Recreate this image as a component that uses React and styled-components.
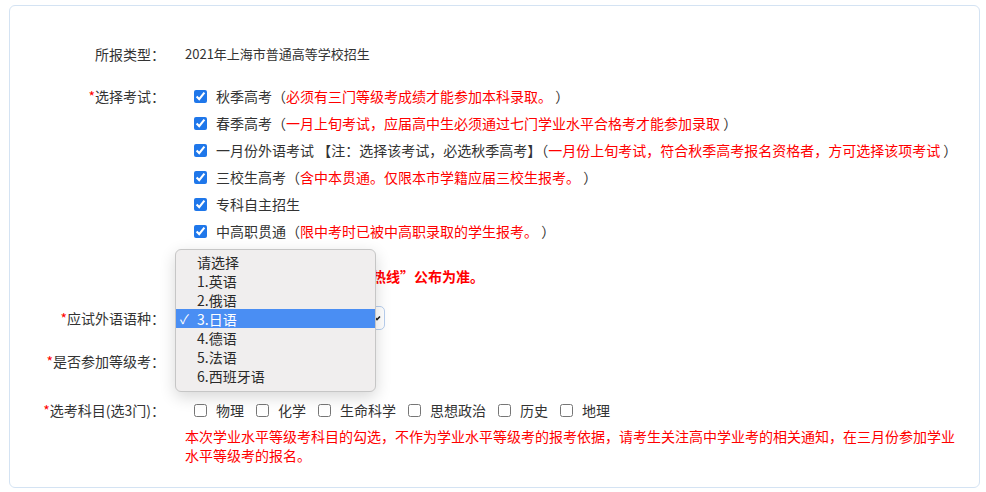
import React from "react";
import styled, { createGlobalStyle } from "styled-components";

const GlobalStyle = createGlobalStyle`
  html, body {
    margin: 0;
    padding: 0;
    background: #fff;
  }
  body {
    font-family: "Noto Sans CJK SC", "Noto Sans", sans-serif;
    font-size: 14px;
    color: #333;
  }
`;

const exams = [
  { label: "秋季高考", note: "必须有三门等级考成绩才能参加本科录取。" },
  { label: "春季高考", note: "一月上旬考试，应届高中生必须通过七门学业水平合格考才能参加录取" },
  {
    label: "一月份外语考试 【注：选择该考试，必选秋季高考】",
    note: "一月份上旬考试，符合秋季高考报名资格者，方可选择该项考试",
  },
  { label: "三校生高考", note: "含中本贯通。仅限本市学籍应届三校生报考。" },
  { label: "专科自主招生" },
  { label: "中高职贯通", note: "限中考时已被中高职录取的学生报考。" },
];

const languages = ["请选择", "1.英语", "2.俄语", "3.日语", "4.德语", "5.法语", "6.西班牙语"];
const subjects = ["物理", "化学", "生命科学", "思想政治", "历史", "地理"];

const App = () => {
  return (
    <>
      <GlobalStyle />
      <Card>
        <Row>
          <Label>所报类型：</Label>
          <Content>
            <ValueText>2021年上海市普通高等学校招生</ValueText>
          </Content>
        </Row>

        <Row $align="flex-start" $mt={22}>
          <Label>
            <Star>*</Star>选择考试：
          </Label>
          <Content>
            <CheckList>
              {exams.map((exam) => (
                <CheckItem key={exam.label}>
                  <Box type="checkbox" defaultChecked />
                  <span>
                    {exam.label}
                    {exam.note && (
                      <>
                        （<RedText>{exam.note}</RedText> ）
                      </>
                    )}
                  </span>
                </CheckItem>
              ))}
            </CheckList>
          </Content>
        </Row>

        <Row $mt={25}>
          <Label />
          <Content>
            <BoldNote>应试外语语种须以“上海招考热线”公布为准。</BoldNote>
          </Content>
        </Row>

        <Row $mt={20}>
          <Label>
            <Star>*</Star>应试外语语种：
          </Label>
          <Content>
            <SelectWrap>
              <FakeSelect>
                <span>3.日语</span>
                <svg width="8" height="6" viewBox="0 0 8 6">
                  <path d="M1 1.5 L4 4.5 L7 1.5" fill="none" stroke="#222" strokeWidth="1.6" />
                </svg>
              </FakeSelect>
              <Popup>
                {languages.map((lang) => (
                  <PopupItem key={lang} $active={lang === "3.日语"}>
                    <Tick>{lang === "3.日语" ? "✓" : ""}</Tick>
                    {lang}
                  </PopupItem>
                ))}
              </Popup>
            </SelectWrap>
          </Content>
        </Row>

        <Row $mt={21}>
          <Label>
            <Star>*</Star>是否参加等级考：
          </Label>
          <Content>
            <InlineChecks>
              <CheckItem>
                <Box type="radio" name="level" defaultChecked />是
              </CheckItem>
              <CheckItem>
                <Box type="radio" name="level" />否
              </CheckItem>
            </InlineChecks>
          </Content>
        </Row>

        <Row $align="flex-start" $mt={29}>
          <Label>
            <Star>*</Star>选考科目(选3门)：
          </Label>
          <Content>
            <InlineChecks>
              {subjects.map((s) => (
                <CheckItem key={s}>
                  <Box type="checkbox" />
                  {s}
                </CheckItem>
              ))}
            </InlineChecks>
            <SubjectNote>
              本次学业水平等级考科目的勾选，不作为学业水平等级考的报考依据，请考生关注高中学业考的相关通知，在三月份参加学业水平等级考的报名。
            </SubjectNote>
          </Content>
        </Row>
      </Card>
    </>
  );
};

// Styled Components
const Card = styled.div`
  position: relative;
  box-sizing: border-box;
  width: 971px;
  height: 483px;
  margin: 5px 0 0 9px;
  padding-top: 38px;
  border: 1px solid #d4e3f3;
  border-radius: 6px;
  background: #fff;
`;

const Row = styled.div`
  display: flex;
  align-items: ${(props) => props.$align || "center"};
  margin-top: ${(props) => props.$mt || 0}px;
`;

const Label = styled.div`
  width: 155px;
  flex-shrink: 0;
  text-align: right;
  line-height: 20px;
  font-size: 14px;
  color: #333;
  white-space: nowrap;
`;

const Star = styled.span`
  color: #f00;
`;

const Content = styled.div`
  margin-left: 20px;
  flex: 1;
  min-width: 0;
`;

const ValueText = styled.div`
  font-size: 13px;
  line-height: 20px;
  color: #333;
`;

const CheckList = styled.div`
  display: flex;
  flex-direction: column;
  gap: 7px;
  padding-left: 9px;
`;

const CheckItem = styled.label`
  display: flex;
  align-items: center;
  height: 20px;
  line-height: 20px;
  font-size: 14px;
  color: #333;
  white-space: nowrap;
`;

const Box = styled.input`
  width: 13px;
  height: 13px;
  margin: 0 9px 0 0;
  accent-color: #1f77ea;
  flex-shrink: 0;
`;

const RedText = styled.span`
  color: #f00;
`;

const BoldNote = styled.div`
  padding-left: 5px;
  font-size: 14px;
  font-weight: bold;
  line-height: 20px;
  color: #f00;
`;

const SelectWrap = styled.div`
  position: relative;
  width: 200px;
`;

const FakeSelect = styled.div`
  box-sizing: border-box;
  display: flex;
  align-items: center;
  justify-content: space-between;
  height: 24px;
  padding: 0 3px 0 12px;
  border: 1px solid #b8cfee;
  border-radius: 5px;
  background: #fff;
  font-size: 14px;
`;

const Popup = styled.div`
  position: absolute;
  left: -10px;
  top: -57px;
  z-index: 10;
  box-sizing: border-box;
  width: 201px;
  padding: 2px 0 6px;
  background: #f0eeee;
  border: 1px solid #c6c6c6;
  border-radius: 6px;
  box-shadow: 0 5px 16px rgba(0, 0, 0, 0.16);
`;

const PopupItem = styled.div`
  display: flex;
  align-items: center;
  height: 19px;
  font-size: 14px;
  color: ${(props) => (props.$active ? "#fff" : "#2a2a2a")};
  background: ${(props) => (props.$active ? "#4a8ef3" : "transparent")};
`;

const Tick = styled.span`
  width: 21px;
  padding-left: 4px;
  box-sizing: border-box;
  font-size: 13px;
`;

const InlineChecks = styled.div`
  display: flex;
  gap: 12px;
  padding-left: 9px;
`;

const SubjectNote = styled.div`
  width: 775px;
  margin-top: 7px;
  font-size: 14px;
  line-height: 19px;
  color: #f00;
`;

export default App;
